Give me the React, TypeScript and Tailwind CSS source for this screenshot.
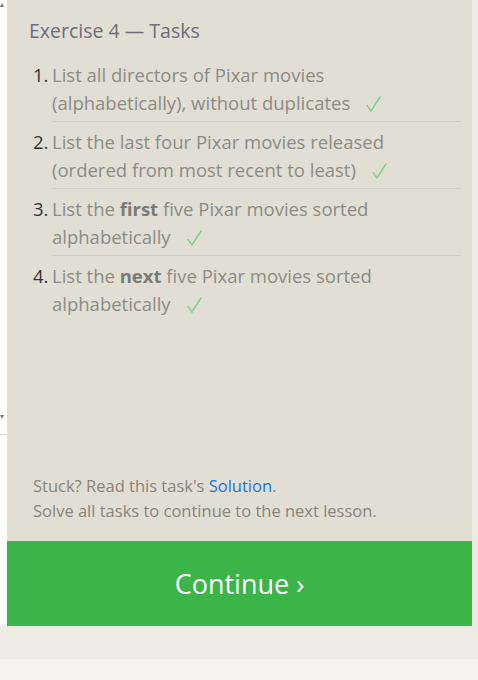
import React from "react";

const tasks = [
  { first: "List all directors of Pixar movies", second: "(alphabetically), without duplicates" },
  { first: "List the last four Pixar movies released", second: "(ordered from most recent to least)" },
  { first: <>List the <b className="font-bold text-[#7a7a76]">first</b> five Pixar movies sorted</>, second: "alphabetically" },
  { first: <>List the <b className="font-bold text-[#7a7a76]">next</b> five Pixar movies sorted</>, second: "alphabetically" },
];

const Check = () => (
  <svg className="ml-[16px] inline-block align-[-2px]" width="15" height="16" viewBox="0 0 15 16">
    <path d="M1 9.5L5 15L14 1" fill="none" stroke="#7fcf8a" strokeWidth="1.4" strokeLinecap="round" />
  </svg>
);

const App = () => {
  return (
    <div className="flex h-[680px] w-full flex-col font-['Open_Sans','Noto_Sans',sans-serif]">
      <div className="flex h-[626px]">
        {/* scroll strip */}
        <div className="flex w-[7px] flex-col bg-white">
          <div className="relative h-[435px] border-b border-[#d8d8d8]">
            <svg className="absolute left-0 top-[3px]" width="4" height="4" viewBox="0 0 4 4">
              <path d="M0 4L2 0L4 4Z" fill="#777" />
            </svg>
            <svg className="absolute left-0 top-[415px]" width="4" height="4" viewBox="0 0 4 4">
              <path d="M0 0L4 0L2 4Z" fill="#777" />
            </svg>
          </div>
        </div>

        {/* panel */}
        <div className="flex flex-1 flex-col bg-[#e1dfd4]">
          <h2 className="px-[22px] pt-[17px] text-[19.5px] leading-[28px] text-[#6c6c7c]">
            Exercise 4 — Tasks
          </h2>
          <ol className="mt-[10px] pl-[26px] pr-[11px]">
            {tasks.map((t, i) => (
              <li key={i} className="flex">
                <span className="w-[19px] shrink-0 pt-[6px] text-[18.5px] leading-[28px] text-[#333]">
                  {i + 1}.
                </span>
                <div
                  className={
                    "flex-1 pb-[4px] pt-[6px] text-[18.5px] leading-[28px] text-[#8c8b86] " +
                    (i < 3 ? "border-b border-[#d2d0c5]" : "")
                  }
                >
                  <div>{t.first}</div>
                  <div>
                    {t.second}
                    <Check />
                  </div>
                </div>
              </li>
            ))}
          </ol>

          <div className="mt-auto px-[26px] pb-[18px] text-[16.5px] leading-[25px] text-[#8a8378]">
            <p>
              Stuck? Read this task's <a className="text-[#1a6fe8]">Solution</a>.
            </p>
            <p>Solve all tasks to continue to the next lesson.</p>
          </div>

          <button className="flex h-[85px] items-center justify-center bg-[#3bb54a] pt-[2px] text-[27px] text-white">
            Continue ›
          </button>
        </div>

        <div className="w-[6px] bg-[#eeebe4]" />
      </div>
      <div className="h-[33px] bg-[#eeebe4]" />
      <div className="flex-1 bg-[#f4f3ef]" />
    </div>
  );
};

export default App;
